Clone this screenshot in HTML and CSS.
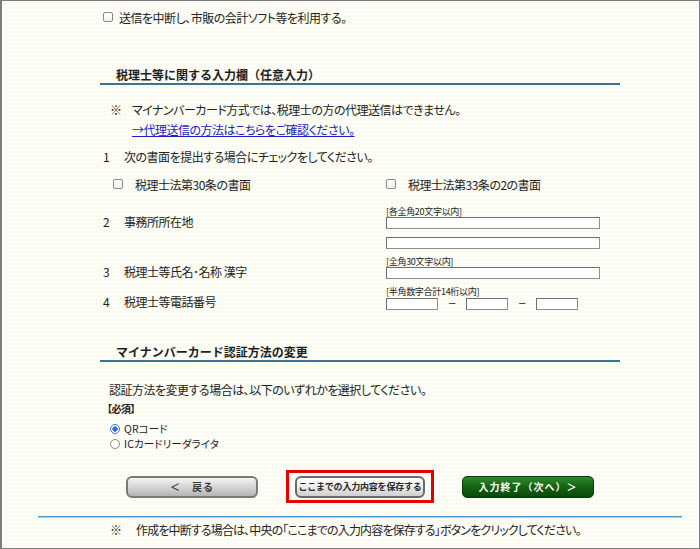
FILE: index.html
```html
<!DOCTYPE html>
<html lang="ja">
<head>
<meta charset="utf-8">
<link rel="stylesheet" href="styles.css">
</head>
<body>
<div class="frame">
  <div class="main">
    <label class="opt-row"><input type="checkbox" class="cb"><span>送信を中断し、市販の会計ソフト等を利用する。</span></label>

    <h2 class="sec-title first">税理士等に関する入力欄（任意入力）</h2>

    <p class="note"><span class="kome">※</span>マイナンバーカード方式では、税理士の方の代理送信はできません。</p>
    <p class="link-row"><a href="#">→代理送信の方法はこちらをご確認ください。</a></p>

    <p class="item"><span class="num">1</span>次の書面を提出する場合にチェックをしてください。</p>
    <div class="doc-checks">
      <label class="doc-check left"><input type="checkbox" class="cb"><span>税理士法第30条の書面</span></label>
      <label class="doc-check"><input type="checkbox" class="cb"><span>税理士法第33条の2の書面</span></label>
    </div>

    <div class="field-row r2">
      <div class="field-label"><span class="num">2</span>事務所所在地</div>
      <div class="field-body">
        <div class="hint">[各全角20文字以内]</div>
        <input type="text" class="tx wide">
        <input type="text" class="tx wide second">
      </div>
    </div>

    <div class="field-row r3">
      <div class="field-label"><span class="num">3</span>税理士等氏名･名称 漢字</div>
      <div class="field-body">
        <div class="hint">[全角30文字以内]</div>
        <input type="text" class="tx wide">
      </div>
    </div>

    <div class="field-row r4">
      <div class="field-label"><span class="num">4</span>税理士等電話番号</div>
      <div class="field-body">
        <div class="hint">[半角数字合計14桁以内]</div>
        <div class="tel">
          <input type="text" class="tx t1"><span class="dash">－</span><input type="text" class="tx t2"><span class="dash">－</span><input type="text" class="tx t3">
        </div>
      </div>
    </div>

    <h2 class="sec-title second">マイナンバーカード認証方法の変更</h2>

    <div class="auth">
      <p class="auth-text">認証方法を変更する場合は、以下のいずれかを選択してください。</p>
      <p class="req">【必須】</p>
      <label class="radio-row qr"><input type="radio" name="auth" class="rd" checked><span>QRコード</span></label>
      <label class="radio-row"><input type="radio" name="auth" class="rd"><span>ICカードリーダライタ</span></label>
    </div>
  </div>

  <div class="buttons">
    <button class="btn back">＜　戻る</button>
    <div class="save-frame"><button class="btn save">ここまでの入力内容を保存する</button></div>
    <button class="btn next">入力終了（次へ）＞</button>
  </div>

  <div class="rule"></div>
  <p class="footer-note"><span class="kome2">※</span>作成を中断する場合は、中央の「ここまでの入力内容を保存する」ボタンをクリックしてください。</p>
</div>
</body>
</html>
```

FILE: styles.css
```css
html, body {
  margin: 0;
  padding: 0;
}

body {
  font-family: "Noto Sans CJK JP", "Noto Sans", sans-serif;
  color: #222;
  font-size: 12px;
}

.frame {
  width: 700px;
  height: 549px;
  box-sizing: border-box;
  border: 1px solid #7d7d7d;
  border-left: 2px solid #7d7d7d;
  background-color: #fbfbe8;
  background-image:
    linear-gradient(#ffffff 1px, transparent 1px),
    linear-gradient(90deg, #ffffff 1px, transparent 1px);
  background-size: 4px 4px;
  overflow: hidden;
}

p { margin: 0; }

.main {
  margin-left: 98px;
  width: 520px;
  font-feature-settings: "palt";
  letter-spacing: -0.5px;
}

.cb {
  appearance: none;
  -webkit-appearance: none;
  width: 10px;
  height: 10px;
  margin: 0;
  border: 1px solid #8a8a8a;
  border-radius: 2px;
  background: linear-gradient(#ffffff, #f0f0f0);
  box-sizing: border-box;
  flex: none;
}

.opt-row {
  display: flex;
  align-items: center;
  height: 18px;
  margin-top: 7px;
  padding-left: 3px;
  gap: 6px;
}

.sec-title {
  margin: 0;
  font-size: 12px;
  font-weight: bold;
  line-height: 16px;
  padding-left: 16px;
  border-bottom: 2px solid #3b7390;
  font-feature-settings: normal;
  letter-spacing: 0;
  color: #1e1e1e;
}

.sec-title.first { margin-top: 41px; }
.sec-title.second { margin-top: 34px; }

.note {
  line-height: 18px;
  margin-top: 16px;
  padding-left: 10px;
  display: flex;
}

.kome { width: 22px; flex: none; }

.link-row {
  line-height: 18px;
  margin-top: 2px;
  padding-left: 32px;
}

.link-row a {
  color: #1a1ac8;
  text-decoration: underline;
}

.item {
  line-height: 18px;
  margin-top: 9px;
  padding-left: 3px;
  display: flex;
}

.num {
  width: 21px;
  flex: none;
  display: inline-block;
}

.doc-checks {
  display: flex;
  height: 18px;
  margin-top: 9px;
}

.doc-check {
  display: flex;
  align-items: center;
  gap: 12px;
}

.doc-check.left {
  width: 273px;
  padding-left: 13px;
}

.field-row {
  display: flex;
  align-items: flex-start;
}

.r2 { margin-top: 13px; }
.r3 { margin-top: 7px; }
.r4 { margin-top: 7px; }

.field-label {
  width: 283px;
  padding-left: 3px;
  padding-top: 9px;
  line-height: 14px;
  display: flex;
  flex: none;
}

.field-body {
  display: flex;
  flex-direction: column;
}

.hint {
  font-size: 9px;
  line-height: 11px;
  height: 11px;
  letter-spacing: -0.3px;
  color: #222;
}

.tx {
  height: 12px;
  margin: 0;
  padding: 0;
  box-sizing: border-box;
  border: 1px solid #8e8e8e;
  border-top-color: #6f6f6f;
  border-left-color: #6f6f6f;
  background: #fff;
}

.tx.wide { width: 214px; }
.tx.second { margin-top: 8px; }

.tel {
  display: flex;
  align-items: center;
  height: 12px;
  margin-top: 1px;
}

.tx.t1 { width: 52px; }
.tx.t2 { width: 42px; }
.tx.t3 { width: 42px; }

.dash {
  width: 28px;
  text-align: center;
  font-size: 9px;
  line-height: 12px;
  height: 12px;
  font-weight: bold;
  color: #444;
  overflow: hidden;
}

.auth {
  padding-left: 9px;
}

.auth-text {
  line-height: 16px;
  margin-top: 20px;
}

.req {
  line-height: 16px;
  margin-top: 3px;
  font-weight: bold;
  font-size: 10px;
  color: #2a1a1a;
  margin-left: -2px;
}

.radio-row {
  display: flex;
  align-items: center;
  height: 15px;
  line-height: 15px;
  gap: 4px;
  font-size: 10.5px;
  letter-spacing: 0.1px;
}

.radio-row.qr { margin-top: 4px; }

.rd {
  appearance: none;
  -webkit-appearance: none;
  width: 10px;
  height: 10px;
  margin: 0 0 0 1px;
  border: 1px solid #8a8a8a;
  border-radius: 50%;
  background: #fff;
  box-sizing: border-box;
  flex: none;
}

.rd:checked {
  border-color: #3a7ad8;
  background: radial-gradient(circle, #2a6fe0 0, #2a6fe0 2.4px, #fff 2.9px);
}

.buttons {
  display: flex;
  justify-content: center;
  align-items: center;
  gap: 28px;
  margin-left: 98px;
  width: 520px;
  height: 33px;
  margin-top: 19px;
}

.btn {
  height: 22px;
  width: 132px;
  margin: 0;
  padding: 0;
  box-sizing: border-box;
  font-family: "Noto Sans CJK JP", sans-serif;
  font-weight: bold;
  font-size: 10px;
  line-height: 18px;
  cursor: pointer;
}

.btn.back {
  border: 2px solid #7a7a7a;
  border-radius: 6px;
  background: linear-gradient(#f4f4f4, #d2d2d2 55%, #b4b4b4);
  color: #3a3a3a;
  letter-spacing: 1px;
}

.save-frame {
  width: 148px;
  height: 33px;
  box-sizing: border-box;
  border: 3px solid #e60000;
  display: flex;
  align-items: center;
  justify-content: center;
  padding-top: 1px;
}

.btn.save {
  width: 130px;
  border: 2px solid #6a6a6a;
  border-radius: 6px;
  background: linear-gradient(#ffffff, #ececec 50%, #cfcfcf);
  color: #2a2a2a;
  font-size: 9px;
  letter-spacing: -0.2px;
}

.btn.next {
  border: 1px solid #0b3d0b;
  border-radius: 5px;
  background: linear-gradient(#2f8a2f, #136313 50%, #0a470a);
  color: #fff;
  letter-spacing: 1px;
}

.rule {
  margin-top: 13px;
  margin-left: 36px;
  width: 644px;
  height: 1px;
  border-top: 1px solid #4a9ad0;
  background: #a8d0ec;
}

.footer-note {
  margin-top: 4px;
  margin-left: 108px;
  line-height: 16px;
  font-feature-settings: "palt";
  letter-spacing: -0.85px;
  display: flex;
}

.kome2 { width: 26px; flex: none; }
```
